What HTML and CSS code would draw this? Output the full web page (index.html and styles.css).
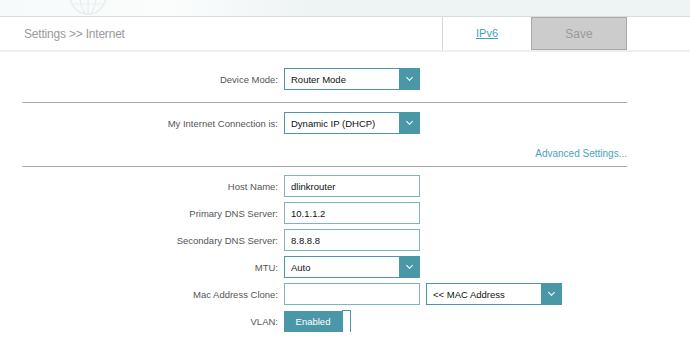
FILE: index.html
```html
<!DOCTYPE html>
<html lang="en">
<head>
    <title>Settings - Internet</title>
    <link rel="stylesheet" href="styles.css">
</head>
<body>
    <div class="banner">
        <svg class="globe" width="40" height="16" viewBox="0 0 40 16">
            <circle cx="20" cy="-4" r="18" fill="none" stroke="#e8eded" stroke-width="1.5"/>
            <path d="M20 -22 V14 M4 4 H36" fill="none" stroke="#e8eded" stroke-width="1.2"/>
            <ellipse cx="20" cy="-4" rx="8" ry="18" fill="none" stroke="#e8eded" stroke-width="1.2"/>
        </svg>
    </div>

    <div class="subbar">
        <p class="crumb">Settings &gt;&gt; Internet</p>
        <div class="tabs">
            <a class="tab" href="#">IPv6</a>
            <button class="save">Save</button>
        </div>
    </div>

    <div class="form">
        <div class="row first">
            <label class="label">Device Mode:</label>
            <div class="select"><span>Router Mode</span><i class="arrow"></i></div>
        </div>

        <hr class="rule top-rule">

        <div class="row conn">
            <label class="label">My Internet Connection is:</label>
            <div class="select"><span>Dynamic IP (DHCP)</span><i class="arrow"></i></div>
        </div>

        <p class="advanced"><a href="#">Advanced Settings...</a></p>

        <hr class="rule">

        <div class="fields">
            <div class="row">
                <label class="label">Host Name:</label>
                <div class="input">dlinkrouter</div>
            </div>
            <div class="row">
                <label class="label">Primary DNS Server:</label>
                <div class="input">10.1.1.2</div>
            </div>
            <div class="row">
                <label class="label">Secondary DNS Server:</label>
                <div class="input">8.8.8.8</div>
            </div>
            <div class="row">
                <label class="label">MTU:</label>
                <div class="select"><span>Auto</span><i class="arrow"></i></div>
            </div>
            <div class="row">
                <label class="label">Mac Address Clone:</label>
                <div class="input"></div>
                <div class="select wide"><span>&lt;&lt; MAC Address</span><i class="arrow"></i></div>
            </div>
            <div class="row">
                <label class="label">VLAN:</label>
                <div class="toggle"><span class="on">Enabled</span><span class="knob"></span></div>
            </div>
        </div>
    </div>
</body>
</html>
```

FILE: styles.css
```css
body {
    margin: 0;
    font-family: "Liberation Sans", Arial, sans-serif;
    background: #fff;
}

.banner {
    position: relative;
    height: 16px;
    background: linear-gradient(90deg, #f7fafa 0%, #fbfdfd 25%, #eef3f3 45%, #eef3f3 100%);
    border-bottom: 1px solid #d6dddd;
    overflow: hidden;
}

.globe {
    position: absolute;
    left: 68px;
    top: 0;
}

.subbar {
    display: flex;
    align-items: stretch;
    height: 33px;
    border-bottom: 2px solid #eeeeee;
}

.crumb {
    margin: 0;
    padding-left: 24px;
    line-height: 34px;
    font-size: 12px;
    color: #9a9a9a;
    letter-spacing: -0.2px;
}

.tabs {
    display: flex;
    margin-left: auto;
    margin-right: 63px;
}

.tab {
    width: 88px;
    border-left: 1px solid #d8d8d8;
    text-align: center;
    line-height: 33px;
    font-size: 11px;
    color: #3f9fbf;
    text-decoration: underline;
}

.save {
    width: 96px;
    margin: 0;
    background: #cccccc;
    border: 1px solid #a9a9a9;
    font-family: inherit;
    font-size: 12px;
    color: #9a9a9a;
}

.form {
    margin: 0 63px 0 22px;
}

.row {
    display: flex;
    align-items: center;
    height: 22px;
}

.row.first {
    margin-top: 16px;
}

.row.conn {
    margin-top: 9px;
}

.label {
    width: 262px;
    padding-right: 6px;
    box-sizing: border-box;
    text-align: right;
    font-size: 9.5px;
    color: #555;
}

.rule {
    margin: 0;
    border: 0;
    border-top: 1px solid #aaaaaa;
}

.top-rule {
    margin-top: 12px;
}

.advanced {
    margin: 13px 0 5px;
    text-align: right;
    font-size: 10px;
    line-height: 14px;
}

.advanced a {
    color: #4aa2bb;
    text-decoration: none;
}

.fields {
    display: flex;
    flex-direction: column;
    gap: 5px;
    margin-top: 8px;
}

.input,
.select {
    display: flex;
    align-items: center;
    box-sizing: border-box;
    width: 136px;
    height: 22px;
    border: 1px solid #7db6c3;
    padding-left: 6px;
    font-size: 9.5px;
    color: #111;
}

.select {
    border-color: #4a97a8;
}

.select span {
    flex-grow: 1;
}

.select.wide {
    margin-left: 6px;
}

.arrow {
    display: flex;
    align-items: center;
    justify-content: center;
    width: 20px;
    height: 100%;
    background: #4a97a8;
}

.arrow::after {
    content: "";
    width: 4px;
    height: 4px;
    margin-top: -3px;
    border-right: 1.5px solid #fff;
    border-bottom: 1.5px solid #fff;
    transform: rotate(45deg);
}

.toggle {
    display: flex;
    align-items: center;
}

.toggle .on {
    width: 58px;
    height: 21px;
    line-height: 21px;
    background: #4a97a8;
    color: #fff;
    font-size: 9.5px;
    text-align: center;
}

.toggle .knob {
    width: 9px;
    height: 26px;
    margin-top: 4px;
    box-sizing: border-box;
    border: 1px solid #4a97a8;
    background: #fff;
}
```
